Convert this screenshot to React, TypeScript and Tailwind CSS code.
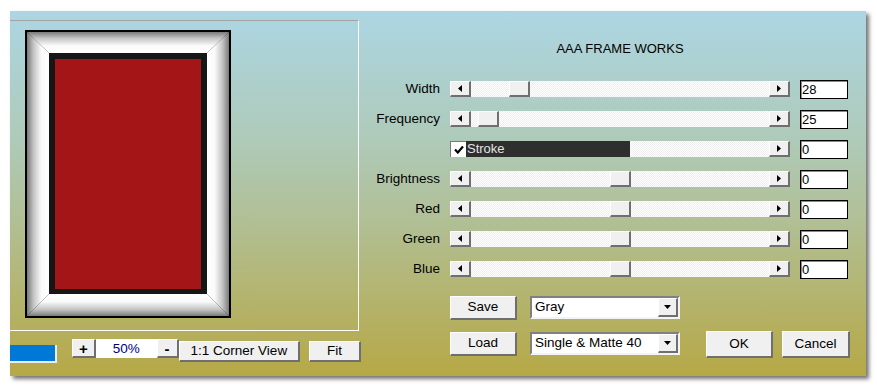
const face =
  "bg-[#f0f0f0] border-t border-l border-t-white border-l-white border-r-2 border-b-2 border-r-[#6f6f6f] border-b-[#6f6f6f]";
const dither =
  "bg-[repeating-conic-gradient(#eeeeee_0%_25%,#ffffff_0%_50%)] bg-[length:2px_2px]";

function Tri({ dir }: { dir: "left" | "right" | "down" }) {
  if (dir === "down")
    return (
      <svg width="7" height="4" viewBox="0 0 7 4">
        <path d="M0 0H7L3.5 4Z" fill="#000" />
      </svg>
    );
  return (
    <svg width="4" height="7" viewBox="0 0 4 7">
      <path d={dir === "left" ? "M4 0V7L0 3.5Z" : "M0 0V7L4 3.5Z"} fill="#000" />
    </svg>
  );
}

function ArrowBtn({ dir }: { dir: "left" | "right" }) {
  return (
    <div className={`flex h-[16px] w-[21px] shrink-0 items-center justify-center ${face}`}>
      <Tri dir={dir} />
    </div>
  );
}

function Slider({ thumb }: { thumb: number }) {
  return (
    <div className="mt-[1px] flex h-[16px] w-[340px]">
      <ArrowBtn dir="left" />
      <div className={`relative flex-1 ${dither}`}>
        <div className={`absolute top-0 h-[16px] w-[21px] ${face}`} style={{ left: thumb }} />
      </div>
      <ArrowBtn dir="right" />
    </div>
  );
}

function StrokeTrack() {
  return (
    <div className="mt-[1px] flex h-[16px] w-[340px]">
      <div className="flex h-[16px] w-[16px] shrink-0 items-center justify-center border-t border-l border-[#7a7a7a] bg-white">
        <svg width="10" height="9" viewBox="0 0 10 9">
          <path d="M1 4.5L3.8 7.5L9 1.5" stroke="#000" strokeWidth="2.2" fill="none" />
        </svg>
      </div>
      <div className="h-[16px] w-[164px] shrink-0 bg-[#2e2e2e] pl-[1px] text-[13px] leading-[16px] text-[#e4e4e4]">
        Stroke
      </div>
      <div className={`flex-1 ${dither}`} />
      <ArrowBtn dir="right" />
    </div>
  );
}

function Row({ label, value, children }: { label: string; value: string; children: React.ReactNode }) {
  return (
    <div className="flex h-[19px] items-start">
      <div className="mt-[1px] w-[79px] text-right text-[13.5px] leading-[16px] text-black">{label}</div>
      <div className="ml-[10px]">{children}</div>
      <div className="ml-[10px] h-[19px] w-[48px] border border-black bg-white pl-[1px] text-[13px] leading-[17px] text-black shadow-[inset_1px_1px_0_#8a8a8a]">
        {value}
      </div>
    </div>
  );
}

function Dropdown({ text }: { text: string }) {
  return (
    <div className="flex h-[23px] w-[150px] items-center border-2 border-t-[#808080] border-l-[#808080] border-r-[#f4f4f4] border-b-[#f4f4f4] bg-white">
      <span className="pl-[3px] text-[13.5px] text-black">{text}</span>
      <div className={`ml-auto flex h-[19px] w-[20px] items-center justify-center ${face}`}>
        <Tri dir="down" />
      </div>
    </div>
  );
}

function FramePreview() {
  return (
    <svg width="206" height="288" viewBox="0 0 206 288">
      <defs>
        <linearGradient id="gt" x1="0" y1="0" x2="0" y2="1">
          <stop offset="0" stopColor="#7a7a7a" />
          <stop offset="0.3" stopColor="#c4c4c4" />
          <stop offset="0.65" stopColor="#fafafa" />
          <stop offset="1" stopColor="#ffffff" />
        </linearGradient>
        <linearGradient id="gb" x1="0" y1="1" x2="0" y2="0">
          <stop offset="0" stopColor="#7a7a7a" />
          <stop offset="0.3" stopColor="#c4c4c4" />
          <stop offset="0.65" stopColor="#fafafa" />
          <stop offset="1" stopColor="#ffffff" />
        </linearGradient>
        <linearGradient id="gl" x1="0" y1="0" x2="1" y2="0">
          <stop offset="0" stopColor="#7a7a7a" />
          <stop offset="0.3" stopColor="#c4c4c4" />
          <stop offset="0.65" stopColor="#fafafa" />
          <stop offset="1" stopColor="#ffffff" />
        </linearGradient>
        <linearGradient id="gr" x1="1" y1="0" x2="0" y2="0">
          <stop offset="0" stopColor="#7a7a7a" />
          <stop offset="0.3" stopColor="#c4c4c4" />
          <stop offset="0.65" stopColor="#fafafa" />
          <stop offset="1" stopColor="#ffffff" />
        </linearGradient>
      </defs>
      <rect x="0" y="0" width="206" height="288" fill="#000" />
      <polygon points="2,2 204,2 182,23 24,23" fill="url(#gt)" />
      <polygon points="24,264 182,264 204,286 2,286" fill="url(#gb)" />
      <polygon points="2,2 24,23 24,264 2,286" fill="url(#gl)" />
      <polygon points="182,23 204,2 204,286 182,264" fill="url(#gr)" />
      <rect x="24" y="23" width="158" height="241" fill="#161616" />
      <rect x="30" y="29" width="146" height="230" fill="#a31517" />
    </svg>
  );
}

const rows = [
  { label: "Width", value: "28", thumb: 38 },
  { label: "Frequency", value: "25", thumb: 7 },
  { label: "", value: "0", thumb: -1 },
  { label: "Brightness", value: "0", thumb: 139 },
  { label: "Red", value: "0", thumb: 139 },
  { label: "Green", value: "0", thumb: 139 },
  { label: "Blue", value: "0", thumb: 139 },
];

export default function App() {
  return (
    <div className="h-[387px] w-[877px] bg-white pt-[11px] pl-[10px] font-['Liberation_Sans',Arial,sans-serif]">
      <div className="flex h-[365px] w-[856px] bg-[linear-gradient(180deg,#acd6e3_0%,#aecab9_35%,#b1bf94_58%,#b6a846_100%)] shadow-[3px_3px_4px_rgba(0,0,0,0.55)]">
        {/* preview side */}
        <div className="w-[351px] shrink-0 pt-[9px]">
          <div className="h-[311px] w-[349px] border-t border-r border-b border-t-[#a3a3a3] border-r-white border-b-white pt-[9px] pl-[15px]">
            <FramePreview />
          </div>
          <div className="mt-[8px] flex items-start">
            <div className="mt-[6px] h-[18px] w-[47px] border-r-2 border-b-2 border-[#ececec] bg-[#0078d7]" />
            <div className={`ml-[15px] flex h-[19px] w-[24px] items-center justify-center text-[15px] font-bold leading-none text-black ${face}`}>
              +
            </div>
            <div className="h-[19px] w-[61px] bg-white text-center text-[13.5px] leading-[19px] text-[#000080]">50%</div>
            <div className={`flex h-[19px] w-[22px] items-center justify-center text-[15px] font-bold leading-none text-black ${face}`}>
              -
            </div>
            <div className={`mt-[2px] flex h-[21px] w-[122px] items-center justify-center text-[13.5px] text-black ${face}`}>
              1:1 Corner View
            </div>
            <div className={`mt-[2px] ml-[9px] flex h-[21px] w-[52px] items-center justify-center text-[13.5px] text-black ${face}`}>
              Fit
            </div>
          </div>
        </div>

        {/* controls side */}
        <div className="flex flex-1 flex-col pt-[30px]">
          <div className="ml-[89px] w-[340px] text-center text-[13px] leading-[15px] text-black">AAA FRAME WORKS</div>
          <div className="mt-[24px] flex flex-col gap-[11px]">
            {rows.map((r, i) => (
              <Row key={i} label={r.label} value={r.value}>
                {r.thumb < 0 ? <StrokeTrack /> : <Slider thumb={r.thumb} />}
              </Row>
            ))}
          </div>
          <div className="mt-[17px] flex pl-[89px]">
            <div className="flex flex-col gap-[12px]">
              <div className={`flex h-[24px] w-[67px] items-center justify-center text-[13.5px] text-black ${face}`}>Save</div>
              <div className={`flex h-[24px] w-[67px] items-center justify-center text-[13.5px] text-black ${face}`}>Load</div>
            </div>
            <div className="ml-[13px] flex flex-col gap-[13px]">
              <Dropdown text="Gray" />
              <Dropdown text="Single & Matte 40" />
            </div>
            <div className={`mt-[35px] ml-[26px] flex h-[27px] w-[67px] items-center justify-center text-[13.5px] text-black ${face}`}>OK</div>
            <div className={`mt-[35px] ml-[9px] flex h-[27px] w-[68px] items-center justify-center text-[13.5px] text-black ${face}`}>Cancel</div>
          </div>
        </div>
      </div>
    </div>
  );
}
